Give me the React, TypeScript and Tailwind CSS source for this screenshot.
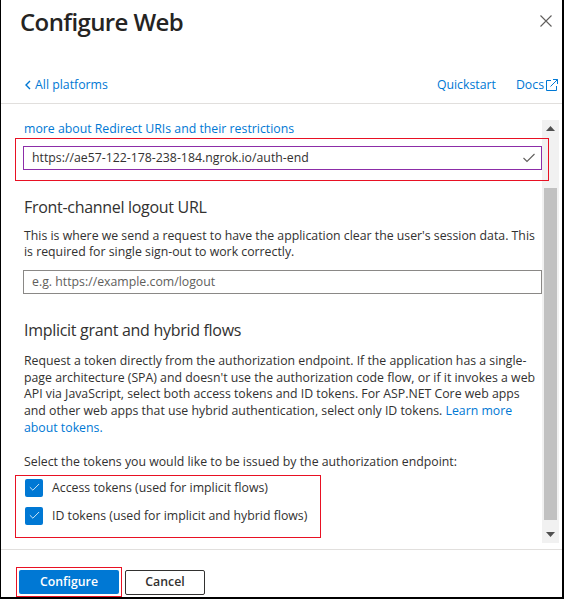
import { Check } from "lucide-react";

function CheckRow({ label }: { label: string }) {
  return (
    <div className="flex h-[28px] items-center gap-[9px] pl-[2px]">
      <div className="flex h-[18px] w-[18px] items-center justify-center rounded-[2px] bg-[#0078d4]">
        <Check size={13} strokeWidth={1.5} className="text-white" />
      </div>
      <span className="whitespace-nowrap">{label}</span>
    </div>
  );
}

export default function App() {
  return (
    <div className="flex h-[599px] w-[564px] flex-col overflow-hidden border-b-2 border-l border-r-2 border-black bg-white font-['Open_Sans',sans-serif] text-[12.3px] text-[#323130]">
      {/* header */}
      <div className="flex items-start justify-between pl-[19px] pr-[10px] pt-[5px]">
        <h1 className="text-[24px] font-semibold leading-[34px] tracking-[-0.6px] text-[#252423]">Configure Web</h1>
        <svg width="12" height="12" viewBox="0 0 12 12" className="mt-[10px]">
          <path d="M0.5 0.5 L11.5 11.5 M11.5 0.5 L0.5 11.5" stroke="#605e5c" strokeWidth="1.1" />
        </svg>
      </div>
      <div className="mt-[38px] flex h-[16px] items-center justify-between pl-[24px] pr-[3px] leading-[16px] text-[#0078d4]">
        <div className="flex items-center gap-[4px]">
          <svg width="6" height="10" viewBox="0 0 6 10">
            <path d="M5 1 L1 5 L5 9" fill="none" stroke="#0078d4" strokeWidth="1.4" />
          </svg>
          <span>All platforms</span>
        </div>
        <div className="flex items-center">
          <span className="mr-[20px]">Quickstart</span>
          <span>Docs</span>
          <svg width="14" height="14" viewBox="0 0 14 14" className="ml-[1px]">
            <path d="M6 2.5 H1.5 V12.5 H11.5 V8" fill="none" stroke="#0078d4" strokeWidth="1" />
            <path d="M8 1.5 H12.5 V6 M12.5 1.5 L5.5 8.5" fill="none" stroke="#0078d4" strokeWidth="1" />
          </svg>
        </div>
      </div>
      <div className="mt-[10px] h-px bg-[#e1dfdd]" />

      {/* body */}
      <div className="flex min-h-0 flex-1 pt-[16px] pb-[6px]">
        <div className="flex-1 pl-[22px] leading-[16px]">
          <p className="mt-px pl-[1px] text-[#0078d4]">more about Redirect URIs and their restrictions</p>
          <div className="relative mt-[9px]">
            <div className="flex h-[24px] items-center justify-between border border-[#8c2da8] pl-[8px] pr-[6px]">
              <span>https://ae57-122-178-238-184.ngrok.io/auth-end</span>
              <svg width="12" height="10" viewBox="0 0 12 10">
                <path d="M0.5 5 L4 8.5 L11.5 1" fill="none" stroke="#605e5c" strokeWidth="1.1" />
              </svg>
            </div>
            <div className="absolute -bottom-[11px] -left-[8px] -right-[7px] -top-[8px] border border-[#e81123]" />
          </div>

          <h2 className="mt-[25px] pl-[1px] text-[16px] leading-[24px] tracking-[-0.3px]">Front-channel logout URL</h2>
          <p className="mt-[9px] pl-[1px]">
            This is where we send a request to have the application clear the user's session data. This is required for
            single sign-out to work correctly.
          </p>
          <div className="mt-[10px] flex h-[24px] items-center border border-[#8a8886] pl-[8px] text-[#605e5c]">
            e.g. https://example.com/logout
          </div>

          <h2 className="mt-[24px] pl-[1px] text-[16px] leading-[24px] tracking-[-0.3px]">
            Implicit grant and hybrid flows
          </h2>
          <p className="mt-[11px] pl-[1px] leading-[16.7px]">
            Request a token directly from the authorization endpoint. If the application has a single-page architecture
            (SPA) and doesn't use the authorization code flow, or if it invokes a web API via JavaScript, select both
            access tokens and ID tokens. For ASP.NET Core web apps and other web apps that use hybrid authentication,
            select only ID tokens. <span className="text-[#0078d4]">Learn more about tokens.</span>
          </p>
          <p className="mt-[17px] pl-[1px]">Select the tokens you would like to be issued by the authorization endpoint:</p>
          <div className="relative mt-[4px] w-[298px]">
            <CheckRow label="Access tokens (used for implicit flows)" />
            <CheckRow label="ID tokens (used for implicit and hybrid flows)" />
            <div className="absolute -bottom-[8px] -left-[8px] right-0 top-[1px] border border-[#e81123]" />
          </div>
        </div>

        {/* scrollbar */}
        <div className="mr-[3px] flex w-[17px] flex-col items-center bg-[#f1f1f1]">
          <div className="flex h-[17px] w-full items-center justify-center">
            <svg width="9" height="5" viewBox="0 0 9 5">
              <path d="M0 5 L4.5 0 L9 5 Z" fill="#505050" />
            </svg>
          </div>
          <div className="mt-[51px] h-[332px] w-[13px] bg-[#c1c1c1]" />
          <div className="flex-1" />
          <div className="flex h-[17px] w-full items-center justify-center">
            <svg width="9" height="5" viewBox="0 0 9 5">
              <path d="M0 0 L4.5 5 L9 0 Z" fill="#505050" />
            </svg>
          </div>
        </div>
      </div>

      {/* footer */}
      <div className="h-px bg-[#e1dfdd]" />
      <div className="flex h-[47px] items-start gap-[6px] pl-[18px] pt-[20px]">
        <div className="relative">
          <button className="h-[24px] w-[100px] rounded-[2px] bg-[#0078d4] font-semibold text-white">Configure</button>
          <div className="absolute -inset-[3px] border border-[#e81123]" />
        </div>
        <button className="h-[25px] w-[80px] rounded-[2px] border border-[#323130] font-semibold">Cancel</button>
      </div>
    </div>
  );
}
